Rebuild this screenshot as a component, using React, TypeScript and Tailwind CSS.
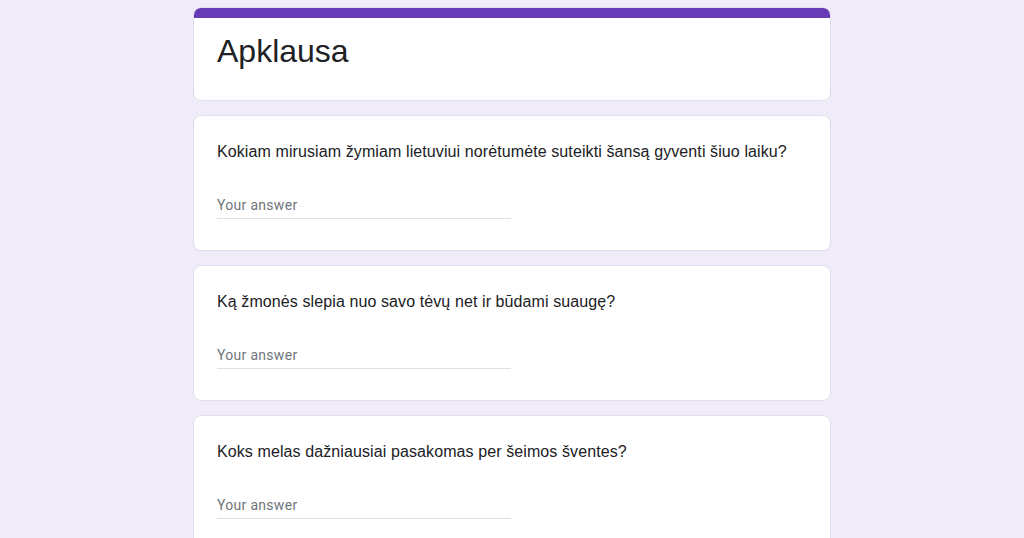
export default function App() {
  const questions = [
    "Kokiam mirusiam žymiam lietuviui norėtumėte suteikti šansą gyventi šiuo laiku?",
    "Ką žmonės slepia nuo savo tėvų net ir būdami suaugę?",
    "Koks melas dažniausiai pasakomas per šeimos šventes?",
  ];

  return (
    <div className="h-[538px] overflow-hidden bg-[#f0ebf8] font-['Liberation_Sans',Arial,sans-serif]">
      <div className="mx-auto flex w-[638px] flex-col gap-[14px] pt-[7px]">
        {/* Header */}
        <div className="overflow-hidden rounded-lg border border-[#e3dced] bg-white">
          <div className="h-[10px] bg-[#673ab7]" />
          <div className="h-[82px] px-[23px] pt-[13px]">
            <h1 className="text-[32px] leading-[40px] text-[#202124]">Apklausa</h1>
          </div>
        </div>

        {questions.map((q) => (
          <div
            key={q}
            className="h-[136px] rounded-lg border border-[#e3dced] bg-white px-[23px] pt-[26px]"
          >
            <p className="text-[16px] leading-[20px] tracking-[0.1px] text-[#202124]">{q}</p>
            <div className="mt-[31px] w-[294px] border-b border-[#e0e0e0] pb-px">
              <span className="font-['Roboto',sans-serif] text-[14px] tracking-[0.3px] text-[#70757a]">
                Your answer
              </span>
            </div>
          </div>
        ))}
      </div>
    </div>
  );
}
